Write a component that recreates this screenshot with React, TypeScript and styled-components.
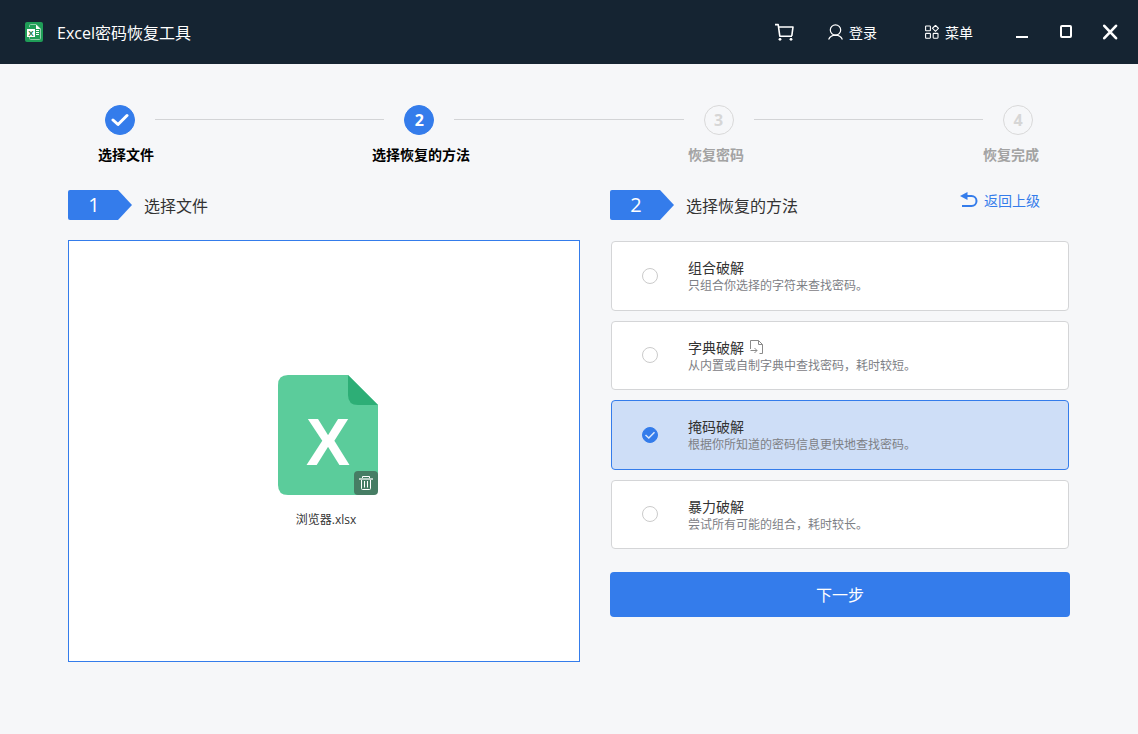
import React, { useState } from 'react';
import styled, { createGlobalStyle, css } from 'styled-components';

const blue = '#347ceb';

const GlobalStyle = createGlobalStyle`
  *, *::before, *::after { box-sizing: border-box; }
  body {
    margin: 0;
    background: #f6f7f9;
    color: #333;
    font-family: "Open Sans", "Noto Sans CJK SC", sans-serif;
    font-size: 14px;
    line-height: 20px;
  }
  button, input { font: inherit; margin: 0; }
  svg { display: block; flex: none; }
  h1, h2, p, ol, ul { margin: 0; padding: 0; font-weight: 400; list-style: none; }
`;

const TitleBar = styled.header`
  display: flex;
  align-items: center;
  height: 64px;
  padding: 0 20px 0 25px;
  background: #152432;
  color: #fff;
`;

const AppTitle = styled.h1`
  flex: 1;
  margin-left: 14px;
  padding-top: 2px;
  font-size: 16px;
  line-height: 24px;
`;

const Actions = styled.nav`
  display: flex;
  align-items: center;
`;

const BarButton = styled.button<{ $before?: number }>`
  display: flex;
  align-items: center;
  gap: 6px;
  margin-left: ${(p) => p.$before ?? 32}px;
  padding: 0;
  border: 0;
  background: none;
  color: inherit;
  line-height: 20px;
  cursor: pointer;
`;

const BarLabel = styled.span`
  padding-top: 2px;
`;

const Stepper = styled.section`
  padding-top: 41px;
`;

const Markers = styled.div`
  display: flex;
  align-items: center;
  padding: 0 105px;
`;

const Marker = styled.span<{ $active?: boolean }>`
  display: grid;
  place-items: center;
  flex: none;
  width: 30px;
  height: 30px;
  border: 1px solid ${(p) => (p.$active ? blue : '#d9d9d9')};
  border-radius: 50%;
  background: ${(p) => (p.$active ? blue : 'transparent')};
  color: ${(p) => (p.$active ? '#fff' : '#d6d6d6')};
  font-size: 16px;
  font-weight: 700;
  line-height: 28px;
`;

const Connector = styled.span`
  flex: 1;
  height: 1px;
  margin: 0 20px 1px;
  background: #d3d4d6;
`;

const StepLabels = styled.ol`
  display: flex;
  justify-content: space-between;
  margin-top: 10px;
  padding: 0 77px 0 76px;
`;

const StepLabel = styled.li<{ $active?: boolean }>`
  width: 100px;
  color: ${(p) => (p.$active ? '#000' : '#a3a3a3')};
  font-weight: 700;
  text-align: center;
  white-space: nowrap;
`;

const Columns = styled.main`
  display: grid;
  grid-template-columns: 512fr 460fr;
  align-items: start;
  gap: 30px;
  padding: 25px 68px 40px;
`;

const SectionHead = styled.div`
  display: flex;
  align-items: center;
  height: 30px;
  margin-bottom: 20px;
`;

const Tag = styled.span`
  width: 64px;
  height: 30px;
  padding-right: 12px;
  border-radius: 2px;
  background: ${blue};
  clip-path: polygon(0 0, 50px 0, 100% 50%, 50px 100%, 0 100%);
  color: #fff;
  font-size: 20px;
  line-height: 30px;
  text-align: center;
`;

const SectionTitle = styled.h2`
  flex: 1;
  margin-left: 12px;
  padding-top: 2px;
  font-size: 16px;
  line-height: 24px;
`;

const BackLink = styled.a`
  display: flex;
  align-items: center;
  align-self: flex-start;
  gap: 6px;
  margin-right: 30px;
  color: ${blue};
  line-height: 22px;
  text-decoration: none;
`;

const FilePanel = styled.div`
  display: flex;
  flex-direction: column;
  align-items: center;
  min-height: 422px;
  padding: 134px 0 40px 8px;
  border: 1px solid ${blue};
  background: #fff;
`;

const FileThumb = styled.div`
  position: relative;
  width: 100px;
  height: 120px;
`;

const DeleteButton = styled.button`
  position: absolute;
  right: 0;
  bottom: 0;
  display: grid;
  place-items: center;
  width: 24px;
  height: 24px;
  padding: 0;
  border: 0;
  border-radius: 4px;
  background: #467d64;
  cursor: pointer;
`;

const FileName = styled.p`
  margin-top: 15px;
  padding-right: 4px;
  font-size: 12px;
`;

const MethodList = styled.div`
  display: grid;
  grid-auto-rows: 1fr;
  gap: 10px;
  min-height: 308px;
  margin: 21px 1px 23px;
`;

const MethodCard = styled.label<{ $selected: boolean }>`
  display: flex;
  align-items: center;
  gap: 30px;
  padding: 0 30px;
  border: 1px solid #d4d5d7;
  border-radius: 4px;
  background: #fff;
  cursor: pointer;
  ${(p) =>
    p.$selected &&
    css`
      border-color: ${blue};
      background: #cedef7;
    `}
`;

const RadioBox = styled.span`
  display: grid;
  flex: none;
  width: 16px;
  height: 16px;
  > * { grid-area: 1 / 1; }
  > svg { pointer-events: none; }
`;

const Radio = styled.input`
  appearance: none;
  width: 16px;
  height: 16px;
  border: 1px solid #cbcbcb;
  border-radius: 50%;
  background: #fff;
  cursor: pointer;
  &:checked { border-color: ${blue}; background: ${blue}; }
`;

const MethodText = styled.span`
  display: flex;
  flex-direction: column;
  padding-top: 1px;
`;

const MethodName = styled.span`
  display: flex;
  align-items: center;
  gap: 6px;
  line-height: 20px;
`;

const MethodHint = styled.span`
  color: #7d8085;
  font-size: 12px;
  line-height: 16px;
`;

const NextButton = styled.button`
  display: block;
  width: 100%;
  height: 45px;
  border: 0;
  border-radius: 4px;
  background: ${blue};
  color: #fff;
  font-size: 16px;
  line-height: 24px;
  cursor: pointer;
`;

const AppLogo = () => (
  <svg width="18" height="20" viewBox="0 0 18 20" aria-hidden="true">
    <rect width="18" height="20" rx="2" fill="#1f9d57" />
    <path d="M4.5 5V3.6Q4.500 2.500 5.600 2.500H11L15.500 7V16.400Q15.500 17.500 14.400 17.500H5.600Q4.500 17.500 4.500 16.400V15" fill="none" stroke="#8fd0aa" />
    <path d="M11 2.500V7H15.500Z" fill="#fff" />
    <path d="M11 8.500H14M11 10.500H14M11 12.500H14" stroke="#fff" />
    <rect x="2" y="7" width="8" height="8" fill="#fff" />
    <text x="6" y="14" textAnchor="middle" fontFamily="Liberation Sans" fontSize="8" fontWeight="700" fill="#157a42">X</text>
  </svg>
);

const CartIcon = () => (
  <svg width="19" height="18" viewBox="0 0 19 18" fill="none" stroke="#fff" strokeWidth="1.6" strokeLinejoin="round" aria-hidden="true">
    <path d="M0 1.600H3.200L4.800 13.200H17M3.600 4H18L16.800 12.800" />
    <circle cx="5" cy="16.300" r="1.400" fill="#fff" stroke="none" />
    <circle cx="16" cy="16.300" r="1.400" fill="#fff" stroke="none" />
  </svg>
);

const UserIcon = () => (
  <svg width="15" height="16" viewBox="0 0 15 16" fill="none" stroke="#fff" strokeWidth="1.2" aria-hidden="true">
    <circle cx="7.500" cy="6" r="5.200" />
    <path d="M.6 15.400Q2.600 11.300 7.500 11.200Q12.400 11.300 14.400 15.400" />
  </svg>
);

const MenuIcon = () => (
  <svg width="14" height="14" viewBox="0 0 14 14" fill="none" stroke="#fff" strokeWidth="1.1" aria-hidden="true">
    <rect x=".6" y="1" width="4.800" height="4.800" rx=".6" />
    <rect x=".6" y="8.400" width="4.800" height="4.800" rx=".6" />
    <rect x="8.200" y="8.400" width="4.800" height="4.800" rx=".6" />
    <path d="M10.500 .3L13.500 3.300L10.500 6.300L7.500 3.300Z" />
  </svg>
);

const BackIcon = () => (
  <svg width="18" height="18" viewBox="0 0 18 18" aria-hidden="true">
    <path d="M0 4L7.500 0V8Z" fill={blue} />
    <path d="M5 4H11.500A4.800 4.800 0 0 1 11.500 14H2" fill="none" stroke={blue} strokeWidth="2" />
  </svg>
);

const ImportIcon = () => (
  <svg width="13" height="16" viewBox="0 0 13 16" fill="none" stroke="#8a8a8a" aria-hidden="true">
    <path d="M.5 9V.5H8.500L12.500 4.500V13.500H9.500M8.500 .5V4.500H12.500M.5 10.500H7M4.500 8L7 10.500L4.500 13" />
  </svg>
);

const FileArt = () => (
  <svg width="100" height="120" viewBox="0 0 100 120" aria-hidden="true">
    <path d="M10 0H70L100 30V110Q100 120 90 120H10Q0 120 0 110V10Q0 0 10 0Z" fill="#5bcc9b" />
    <path d="M70 0L100 30H80Q70 30 70 20Z" fill="#2dae76" />
    <text x="50" y="90" textAnchor="middle" fontFamily="Liberation Sans" fontSize="66" fontWeight="700" fill="#fff">X</text>
  </svg>
);

const TrashIcon = () => (
  <svg width="14" height="14" viewBox="0 0 14 14" fill="none" stroke="#fff" aria-hidden="true">
    <path d="M3.500 3V.5H10.500V3" />
    <path d="M0 3H14" stroke="#b9cec4" strokeWidth="2" />
    <path d="M2.500 4V12.500Q2.500 13.500 3.500 13.500H10.500Q11.500 13.500 11.500 12.500V4M5.500 5V11.500M8.500 5V11.500" />
  </svg>
);

const steps = ['选择文件', '选择恢复的方法', '恢复密码', '恢复完成'];
const currentStep = 1;

const methods = [
  { id: 'combination', name: '组合破解', hint: '只组合你选择的字符来查找密码。' },
  { id: 'dictionary', name: '字典破解', hint: '从内置或自制字典中查找密码，耗时较短。', importable: true },
  { id: 'mask', name: '掩码破解', hint: '根据你所知道的密码信息更快地查找密码。' },
  { id: 'brute', name: '暴力破解', hint: '尝试所有可能的组合，耗时较长。' },
];

export default function App() {
  const [selected, setSelected] = useState('mask');

  return (
    <div lang="zh-CN">
      <GlobalStyle />
      <TitleBar>
        <AppLogo />
        <AppTitle>Excel密码恢复工具</AppTitle>
        <Actions>
          <BarButton aria-label="购物车"><CartIcon /></BarButton>
          <BarButton $before={34}><UserIcon /><BarLabel>登录</BarLabel></BarButton>
          <BarButton $before={48}><MenuIcon /><BarLabel>菜单</BarLabel></BarButton>
          <BarButton $before={43} aria-label="最小化">
            <svg width="12" height="14" viewBox="0 0 12 14"><path d="M0 12H12" stroke="#fff" strokeWidth="2" /></svg>
          </BarButton>
          <BarButton aria-label="最大化">
            <svg width="12" height="14" viewBox="0 0 12 14"><rect x="1" y="1" width="10" height="11" rx="1" fill="none" stroke="#fff" strokeWidth="2" /></svg>
          </BarButton>
          <BarButton $before={30} aria-label="关闭">
            <svg width="16" height="16" viewBox="0 0 16 16"><path d="M2.300 1.800L14 14.200M14 1.800L2.300 14.200" stroke="#fff" strokeWidth="2.600" strokeLinecap="round" /></svg>
          </BarButton>
        </Actions>
      </TitleBar>

      <Stepper>
        <Markers aria-hidden="true">
          {steps.map((label, i) => (
            <React.Fragment key={label}>
              {i > 0 && <Connector />}
              <Marker $active={i <= currentStep}>
                {i < currentStep ? (
                  <svg width="18" height="14" viewBox="0 0 18 14" fill="none" stroke="#fff" strokeWidth="3" strokeLinecap="round" strokeLinejoin="round">
                    <path d="M2 7L7 11.500L16 2.500" />
                  </svg>
                ) : (
                  i + 1
                )}
              </Marker>
            </React.Fragment>
          ))}
        </Markers>
        <StepLabels>
          {steps.map((label, i) => (
            <StepLabel key={label} $active={i <= currentStep}>{label}</StepLabel>
          ))}
        </StepLabels>
      </Stepper>

      <Columns>
        <section>
          <SectionHead>
            <Tag>1</Tag>
            <SectionTitle>选择文件</SectionTitle>
          </SectionHead>
          <FilePanel>
            <FileThumb>
              <FileArt />
              <DeleteButton aria-label="删除"><TrashIcon /></DeleteButton>
            </FileThumb>
            <FileName>浏览器.xlsx</FileName>
          </FilePanel>
        </section>

        <section>
          <SectionHead>
            <Tag>2</Tag>
            <SectionTitle>选择恢复的方法</SectionTitle>
            <BackLink href="#"><BackIcon />返回上级</BackLink>
          </SectionHead>
          <MethodList role="radiogroup" aria-label="选择恢复的方法">
            {methods.map((m) => (
              <MethodCard key={m.id} $selected={m.id === selected}>
                <RadioBox>
                  <Radio type="radio" name="method" checked={m.id === selected} onChange={() => setSelected(m.id)} />
                  {m.id === selected && (
                    <svg width="16" height="16" viewBox="0 0 16 16" fill="none" stroke="#dce8fb" strokeWidth="1.500">
                      <path d="M3.500 8L6.800 11L12.500 5.200" />
                    </svg>
                  )}
                </RadioBox>
                <MethodText>
                  <MethodName>{m.name}{m.importable && <ImportIcon />}</MethodName>
                  <MethodHint>{m.hint}</MethodHint>
                </MethodText>
              </MethodCard>
            ))}
          </MethodList>
          <NextButton>下一步</NextButton>
        </section>
      </Columns>
    </div>
  );
}
